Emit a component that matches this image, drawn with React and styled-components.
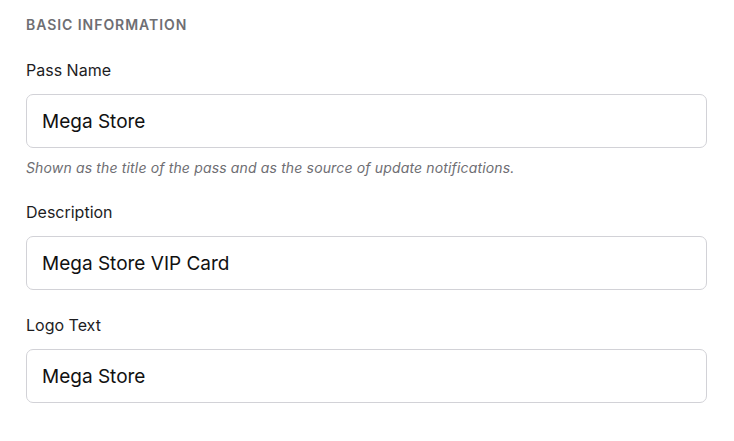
import styled, { createGlobalStyle } from "styled-components";

const GlobalStyle = createGlobalStyle`
  body {
    margin: 0;
    background: #ffffff;
    font-family: Inter, "Noto Sans", "Liberation Sans", sans-serif;
  }
`;

const fields = [
  {
    id: "passName",
    label: "Pass Name",
    value: "Mega Store",
    hint: "Shown as the title of the pass and as the source of update notifications.",
  },
  { id: "description", label: "Description", value: "Mega Store VIP Card" },
  { id: "logoText", label: "Logo Text", value: "Mega Store" },
];

export default function App() {
  return (
    <>
      <GlobalStyle />
      <Section>
        <Heading>Basic Information</Heading>
        {fields.map((field) => (
          <Field key={field.id}>
            <Label htmlFor={field.id}>{field.label}</Label>
            <Input id={field.id} defaultValue={field.value} />
            {field.hint && <Hint>{field.hint}</Hint>}
          </Field>
        ))}
      </Section>
    </>
  );
}

const Section = styled.section`
  display: flex;
  flex-direction: column;
  padding: 16px 27px 0 26px;
`;

const Heading = styled.h2`
  margin: 0 0 26px;
  font-size: 14px;
  line-height: 18px;
  font-weight: 600;
  letter-spacing: 0.95px;
  text-transform: uppercase;
  color: #6e6e73;
`;

const Field = styled.div`
  display: flex;
  flex-direction: column;
  margin-bottom: 25px;
`;

const Label = styled.label`
  font-size: 16px;
  line-height: 20px;
  font-weight: 400;
  color: #1d1d1f;
  margin-bottom: 14px;
`;

const Input = styled.input`
  box-sizing: border-box;
  height: 54px;
  width: 100%;
  padding: 0 15px;
  border: 1px solid #d2d2d7;
  border-radius: 7px;
  background: #ffffff;
  font-family: inherit;
  font-size: 19px;
  color: #111111;
  outline: none;
`;

const Hint = styled.p`
  margin: 11px 0 0;
  font-size: 14px;
  line-height: 18px;
  font-style: italic;
  letter-spacing: 0.15px;
  color: #6e6e73;
`;
